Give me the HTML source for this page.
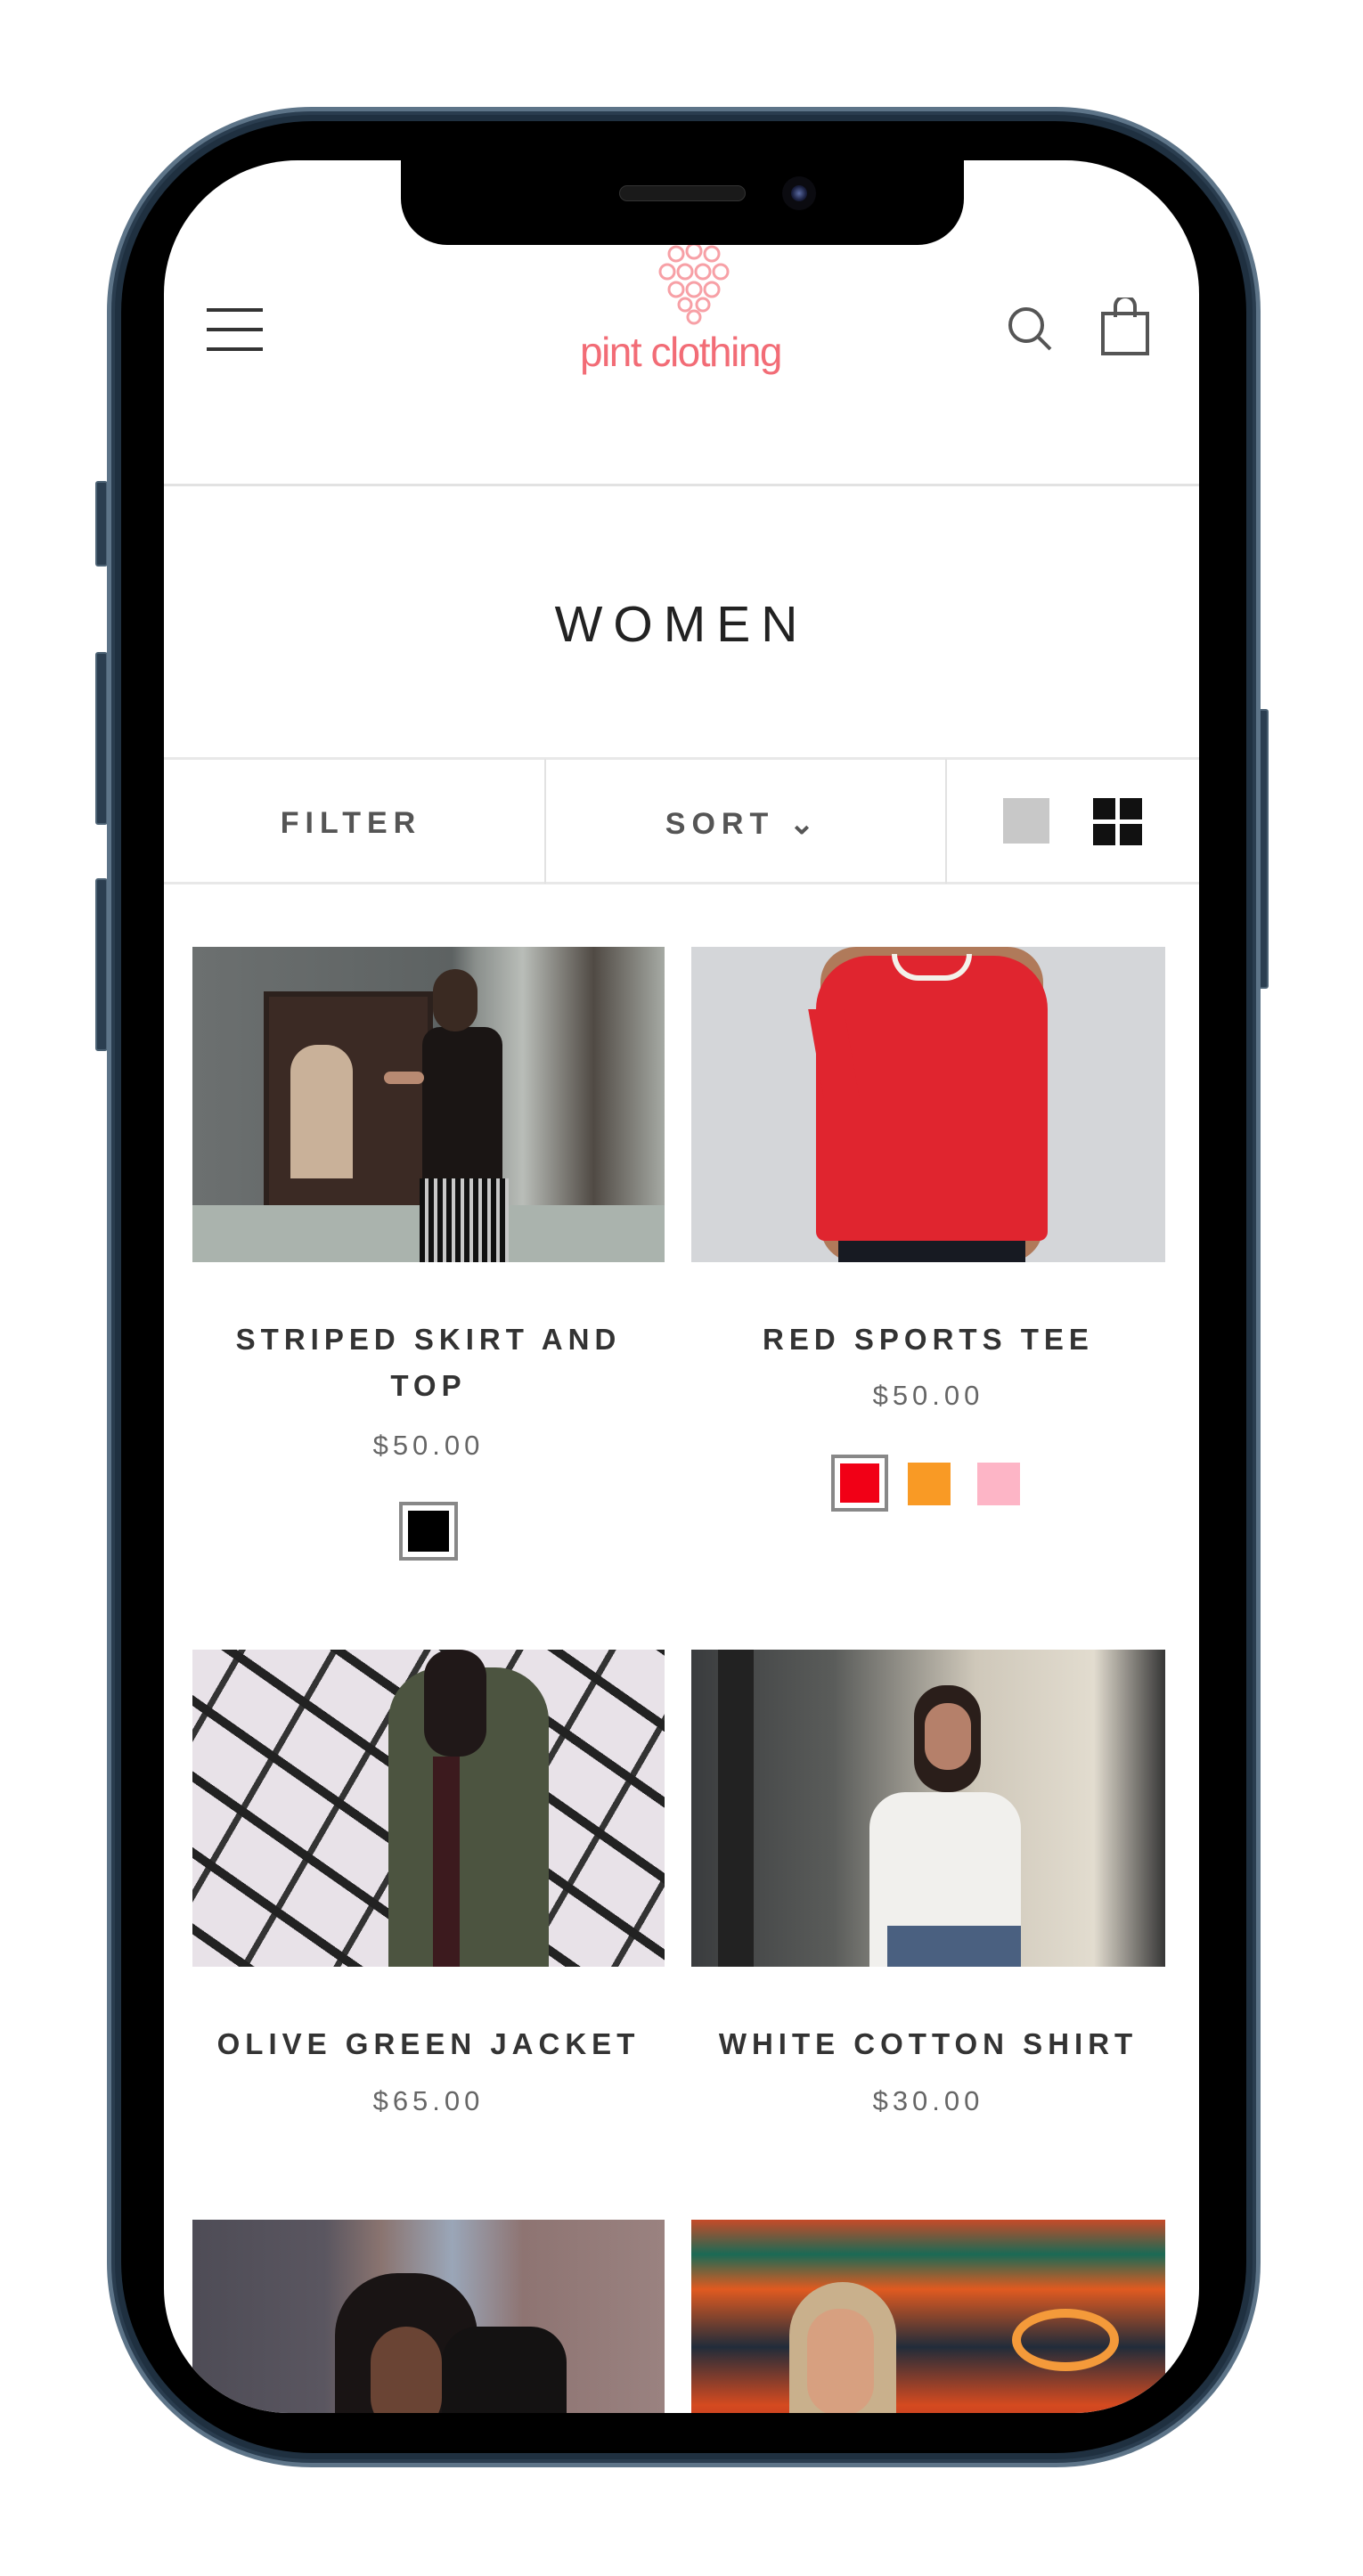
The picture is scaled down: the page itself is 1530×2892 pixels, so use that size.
<!DOCTYPE html>
<html><head><meta charset="utf-8"><style>
*{margin:0;padding:0;box-sizing:border-box}
body{width:1530px;height:2892px;background:#fff;position:relative;overflow:hidden;font-family:"Liberation Sans",sans-serif}
.a{position:absolute}
.frame{left:120px;top:120px;width:1295px;height:2650px;border-radius:230px;background:#1f3040;border:5px solid #5d7488;box-shadow:inset 0 0 0 4px #2a3d4f}
.bezel{left:136px;top:136px;width:1263px;height:2618px;border-radius:215px;background:#000}
.screen{left:184px;top:180px;width:1162px;height:2529px;border-radius:150px 150px 140px 140px;background:#fff;overflow:hidden}
.btn{background:#2b3e50;border:2px solid #4c6274}
.t{position:absolute;text-align:center;color:#333;font-weight:bold;letter-spacing:6px;font-size:33px}
.p{position:absolute;text-align:center;color:#666;letter-spacing:5px;font-size:31px}
</style></head><body>
<div class="a btn" style="left:107px;top:540px;width:14px;height:96px;border-radius:3px"></div>
<div class="a btn" style="left:107px;top:732px;width:14px;height:194px;border-radius:3px"></div>
<div class="a btn" style="left:107px;top:986px;width:14px;height:194px;border-radius:3px"></div>
<div class="a btn" style="left:1412px;top:796px;width:12px;height:314px;border-radius:3px"></div>
<div class="a frame"></div>
<div class="a bezel"></div>
<div class="a screen">
 <!-- content, coords relative: subtract 184,180 -->
 <div class="a" style="left:48px;top:166px;width:63px;height:4px;background:#333"></div>
 <div class="a" style="left:48px;top:188px;width:63px;height:4px;background:#333"></div>
 <div class="a" style="left:48px;top:210px;width:63px;height:4px;background:#333"></div>
 <svg class="a" style="left:540px;top:90px" width="110" height="100" viewBox="0 0 110 100" fill="none" stroke="#f7a0a6" stroke-width="3">
  <circle cx="35" cy="15" r="8"/><circle cx="55" cy="12" r="8"/><circle cx="75" cy="15" r="8"/>
  <circle cx="25" cy="35" r="8"/><circle cx="45" cy="35" r="8"/><circle cx="65" cy="35" r="8"/><circle cx="85" cy="35" r="8"/>
  <circle cx="35" cy="55" r="8"/><circle cx="55" cy="55" r="8"/><circle cx="75" cy="55" r="8"/>
  <circle cx="45" cy="72" r="7"/><circle cx="65" cy="72" r="7"/><circle cx="55" cy="86" r="7"/>
 </svg>
 <div class="a" style="left:430px;top:188px;width:300px;text-align:center;color:#f26c76;font-size:46px;letter-spacing:-1.5px">pint clothing</div>
 <svg class="a" style="left:945px;top:162px" width="56" height="56" viewBox="0 0 56 56" fill="none" stroke="#555" stroke-width="4"><circle cx="23" cy="23" r="18"/><path d="M36 36 L50 50"/></svg>
 <svg class="a" style="left:1051px;top:154px" width="56" height="66" viewBox="0 0 56 66" fill="none" stroke="#555" stroke-width="4"><rect x="3" y="18" width="50" height="45"/><path d="M17 22 V10 a11 11 0 0 1 22 0 V22"/></svg>
 <div class="a" style="left:0;top:363px;width:1162px;height:3px;background:#e2e2e2"></div>
 <div class="a" style="left:0;top:488px;width:1162px;text-align:center;font-size:57px;letter-spacing:12px;color:#222">WOMEN</div>
 <div class="a" style="left:0;top:670px;width:1162px;height:3px;background:#e8e8e8"></div>
 <div class="a" style="left:0;top:810px;width:1162px;height:3px;background:#e8e8e8"></div>
 <div class="a" style="left:427px;top:672px;width:2px;height:140px;background:#e2e2e2"></div>
 <div class="a" style="left:877px;top:672px;width:2px;height:140px;background:#e2e2e2"></div>
 <div class="a" style="left:60px;top:725px;width:300px;text-align:center;font-size:34px;letter-spacing:7px;color:#555;font-weight:bold">FILTER</div>
 <div class="a" style="left:500px;top:725px;width:300px;text-align:center;font-size:34px;letter-spacing:7px;color:#555;font-weight:bold">SORT &#8964;</div>
 <div class="a" style="left:942px;top:716px;width:52px;height:51px;background:#c8c8c8"></div>
 <div class="a" style="left:1043px;top:716px;width:25px;height:24px;background:#111"></div>
 <div class="a" style="left:1073px;top:716px;width:25px;height:24px;background:#111"></div>
 <div class="a" style="left:1043px;top:745px;width:25px;height:24px;background:#111"></div>
 <div class="a" style="left:1073px;top:745px;width:25px;height:24px;background:#111"></div>

 <!-- product 1 -->
 <div class="a" style="left:32px;top:883px;width:530px;height:354px;overflow:hidden;background:linear-gradient(90deg,#6c7070 0%,#5d6262 55%,#8a8f8c 60%,#b9bdb8 70%,#504a44 85%,#a6aaa4 100%)">
  <div class="a" style="left:80px;top:50px;width:190px;height:250px;background:#3b2a24;border:6px solid #2c211d"></div>
  <div class="a" style="left:110px;top:110px;width:70px;height:150px;background:#c9b199;border-radius:30px 30px 0 0"></div>
  <div class="a" style="left:0;top:290px;width:530px;height:64px;background:#aab3ad"></div>
  <div class="a" style="left:258px;top:90px;width:90px;height:200px;background:#1a1514;border-radius:20px"></div>
  <div class="a" style="left:255px;top:260px;width:100px;height:100px;background:repeating-linear-gradient(90deg,#111 0 6px,#c8c8c8 6px 10px)"></div>
  <div class="a" style="left:270px;top:25px;width:50px;height:70px;background:#3a2a22;border-radius:25px"></div>
  <div class="a" style="left:215px;top:140px;width:45px;height:14px;background:#b88a72;border-radius:8px"></div>
 </div>
 <!-- product 2 -->
 <div class="a" style="left:592px;top:883px;width:532px;height:354px;overflow:hidden;background:#d4d6d9">
  <div class="a" style="left:145px;top:0;width:250px;height:354px;background:#b07a5a;border-radius:40px"></div>
  <div class="a" style="left:140px;top:10px;width:260px;height:320px;background:#e0252f;border-radius:60px 60px 10px 10px"></div>
  <div class="a" style="left:140px;top:70px;width:40px;height:100px;background:#e0252f;transform:skewX(10deg)"></div>
  <div class="a" style="left:360px;top:70px;width:40px;height:100px;background:#e0252f"></div>
  <div class="a" style="left:225px;top:8px;width:90px;height:30px;border:6px solid #f3f1ea;border-top:none;border-radius:0 0 45px 45px"></div>
  <div class="a" style="left:165px;top:330px;width:210px;height:30px;background:#171a22"></div>
 </div>
 <div class="t" style="left:32px;top:1305px;width:530px">STRIPED SKIRT AND</div>
 <div class="t" style="left:32px;top:1357px;width:530px">TOP</div>
 <div class="p" style="left:32px;top:1425px;width:530px">$50.00</div>
 <div class="a" style="left:264px;top:1506px;width:66px;height:66px;border:4px solid #888;padding:6px"><div style="width:100%;height:100%;background:#000"></div></div>
 <div class="t" style="left:592px;top:1305px;width:532px">RED SPORTS TEE</div>
 <div class="p" style="left:592px;top:1369px;width:532px">$50.00</div>
 <div class="a" style="left:749px;top:1453px;width:64px;height:64px;border:4px solid #888;padding:6px"><div style="width:100%;height:100%;background:#f10016"></div></div>
 <div class="a" style="left:835px;top:1462px;width:48px;height:48px;background:#f99a25"></div>
 <div class="a" style="left:913px;top:1462px;width:48px;height:48px;background:#fdb5c6"></div>

 <!-- row 2 -->
 <div class="a" style="left:32px;top:1672px;width:530px;height:356px;overflow:hidden;background:#e8e2e8">
  <div class="a" style="left:0;top:0;width:530px;height:356px;background:repeating-linear-gradient(35deg,transparent 0 30px,#222 30px 40px,transparent 40px 70px),repeating-linear-gradient(-60deg,transparent 0 45px,#333 45px 52px,transparent 52px 90px)"></div>
  <div class="a" style="left:220px;top:20px;width:180px;height:336px;background:#4c5440;border-radius:60px 60px 0 0"></div>
  <div class="a" style="left:260px;top:0;width:70px;height:120px;background:#201818;border-radius:30px"></div>
  <div class="a" style="left:270px;top:120px;width:30px;height:236px;background:#3c1a1e"></div>
 </div>
 <div class="a" style="left:592px;top:1672px;width:532px;height:356px;overflow:hidden;background:linear-gradient(90deg,#3a3c3e 0%,#5a5c5a 30%,#cfc8ba 60%,#e2dccf 85%,#363636 100%)">
  <div class="a" style="left:30px;top:0;width:40px;height:356px;background:#222"></div>
  <div class="a" style="left:200px;top:160px;width:170px;height:196px;background:#f1f0ed;border-radius:40px 40px 0 0"></div>
  <div class="a" style="left:250px;top:40px;width:75px;height:120px;background:#2a1e1a;border-radius:35px"></div>
  <div class="a" style="left:262px;top:60px;width:52px;height:75px;background:#b5806a;border-radius:25px"></div>
  <div class="a" style="left:220px;top:310px;width:150px;height:46px;background:#4a6080"></div>
 </div>
 <div class="t" style="left:32px;top:2096px;width:530px">OLIVE GREEN JACKET</div>
 <div class="p" style="left:32px;top:2161px;width:530px">$65.00</div>
 <div class="t" style="left:592px;top:2096px;width:532px">WHITE COTTON SHIRT</div>
 <div class="p" style="left:592px;top:2161px;width:532px">$30.00</div>

 <!-- row 3 -->
 <div class="a" style="left:32px;top:2312px;width:530px;height:260px;overflow:hidden;background:linear-gradient(90deg,#4e4c56 0%,#5a5660 28%,#8a7470 40%,#9aa6b8 55%,#8e7472 70%,#9a8280 100%)">
  <div class="a" style="left:160px;top:60px;width:160px;height:200px;background:#191414;border-radius:70px 70px 0 0"></div>
  <div class="a" style="left:200px;top:120px;width:80px;height:120px;background:#6a4434;border-radius:40px"></div>
  <div class="a" style="left:280px;top:120px;width:140px;height:140px;background:#141212;border-radius:40px"></div>
 </div>
 <div class="a" style="left:592px;top:2312px;width:532px;height:260px;overflow:hidden;background:linear-gradient(180deg,#c64a28 0%,#1a6a55 15%,#e05a20 30%,#212c3a 55%,#d44a20 80%,#b83020 100%)">
  <div class="a" style="left:110px;top:70px;width:120px;height:190px;background:#c9b08c;border-radius:60px 60px 0 0"></div>
  <div class="a" style="left:130px;top:100px;width:75px;height:120px;background:#d7a080;border-radius:35px"></div>
  <div class="a" style="left:360px;top:100px;width:120px;height:70px;border:10px solid #f49a3a;border-radius:50%"></div>
 </div>
</div>
<!-- notch -->
<div class="a" style="left:450px;top:176px;width:632px;height:99px;background:#000;border-radius:0 0 52px 52px"></div>
<div class="a" style="left:695px;top:208px;width:142px;height:18px;background:#1a1a1a;border-radius:9px;border:1px solid #333"></div>
<div class="a" style="left:878px;top:198px;width:38px;height:38px;background:#0b0b10;border-radius:50%"></div>
<div class="a" style="left:888px;top:208px;width:18px;height:18px;background:radial-gradient(circle,#5a6aa0 0,#1a2040 60%,#080810 100%);border-radius:50%"></div>
</body></html>
